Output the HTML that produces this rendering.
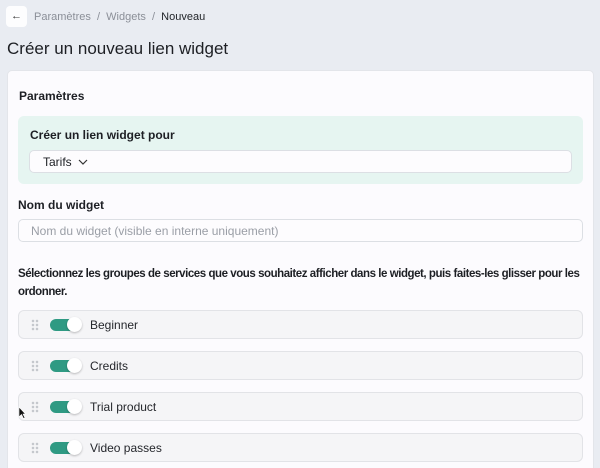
<!DOCTYPE html>
<html><head><meta charset="utf-8"><style>
*{box-sizing:border-box;margin:0;padding:0}
html,body{width:600px;height:468px;overflow:hidden}
body{background:#e9ecf2;font-family:"Liberation Sans",sans-serif;color:#1d1f24;position:relative}
.abs{position:absolute}
.back{left:6px;top:6px;width:21px;height:21px;background:#fdfdfe;border-radius:4px;font-size:11px;text-align:center;line-height:21px;color:#333}
.crumb{left:34px;top:11px;font-size:11px;color:#8b8f98}
.crumb b{font-weight:normal;color:#22252a}
h1{position:absolute;left:7px;top:39px;font-size:17px;font-weight:normal;color:#1d1f24}
.card{left:7px;top:70px;width:587px;height:420px;background:#fcfbfe;border-radius:5px;border:1px solid #e3e5ea}
.lbl{font-size:12px;font-weight:bold}
.green{left:18px;top:116px;width:565px;height:68px;background:#e6f5f1;border-radius:6px}
.sel{left:29px;top:150px;width:543px;height:23px;background:#fdfcfe;border:1px solid #dcdfe4;border-radius:5px;font-size:12px;padding:4px 0 0 13px}
.inp{left:18px;top:219px;width:565px;height:23px;background:#fdfcfe;border:1px solid #dcdfe4;border-radius:5px;font-size:12px;color:#9a9ea6;padding:4px 0 0 12px}
.desc{left:18px;top:265px;width:572px;font-size:11.5px;font-weight:bold;line-height:18px;letter-spacing:-0.45px}
.row{left:18px;width:565px;height:29px;background:#f5f5f7;border:1px solid #e2e3e7;border-radius:6px}
.dots{position:absolute;left:12px;top:8px;width:8px;height:12px;background-image:radial-gradient(circle,#c5c8cd 1.2px,transparent 1.4px);background-size:4px 4px}
.tg{position:absolute;left:31px;top:8px;width:30px;height:12px;background:#2f9a83;border-radius:6px}
.tg:after{content:"";position:absolute;right:-2px;top:-2px;width:15px;height:15px;border-radius:50%;background:#fff;box-shadow:0 1px 2px rgba(0,0,0,.25)}
.rt{position:absolute;left:71px;top:7px;font-size:12px;color:#25272c}
</style></head><body>
<div class="abs back">←</div>
<div class="abs crumb">Paramètres &nbsp;/&nbsp; Widgets &nbsp;/&nbsp; <b>Nouveau</b></div>
<h1>Créer un nouveau lien widget</h1>
<div class="abs card"></div>
<div class="abs lbl" style="left:19px;top:89px">Paramètres</div>
<div class="abs green"></div>
<div class="abs lbl" style="left:30px;top:128px">Créer un lien widget pour</div>
<div class="abs sel">Tarifs <svg width="10" height="8" viewBox="0 0 10 8" style="margin-left:3px"><path d="M1 2l4 4 4-4" fill="none" stroke="#333" stroke-width="1.2"/></svg></div>
<div class="abs lbl" style="left:18px;top:198px">Nom du widget</div>
<div class="abs inp">Nom du widget (visible en interne uniquement)</div>
<div class="abs desc">Sélectionnez les groupes de services que vous souhaitez afficher dans le widget, puis faites-les glisser pour les ordonner.</div>
<div class="abs row" style="top:310px"><div class="dots"></div><div class="tg"></div><div class="rt">Beginner</div></div>
<div class="abs row" style="top:351px"><div class="dots"></div><div class="tg"></div><div class="rt">Credits</div></div>
<div class="abs row" style="top:392px"><div class="dots"></div><div class="tg"></div><div class="rt">Trial product</div></div>
<div class="abs row" style="top:433px"><div class="dots"></div><div class="tg"></div><div class="rt">Video passes</div></div>
<svg class="abs" style="left:18px;top:406px" width="8" height="13" viewBox="0 0 8 13"><path d="M1 1v10l2.5-2.5 2 4 1.5-.7-2-3.8H7.5z" fill="#111" stroke="#fff" stroke-width=".6"/></svg>
</body></html>
